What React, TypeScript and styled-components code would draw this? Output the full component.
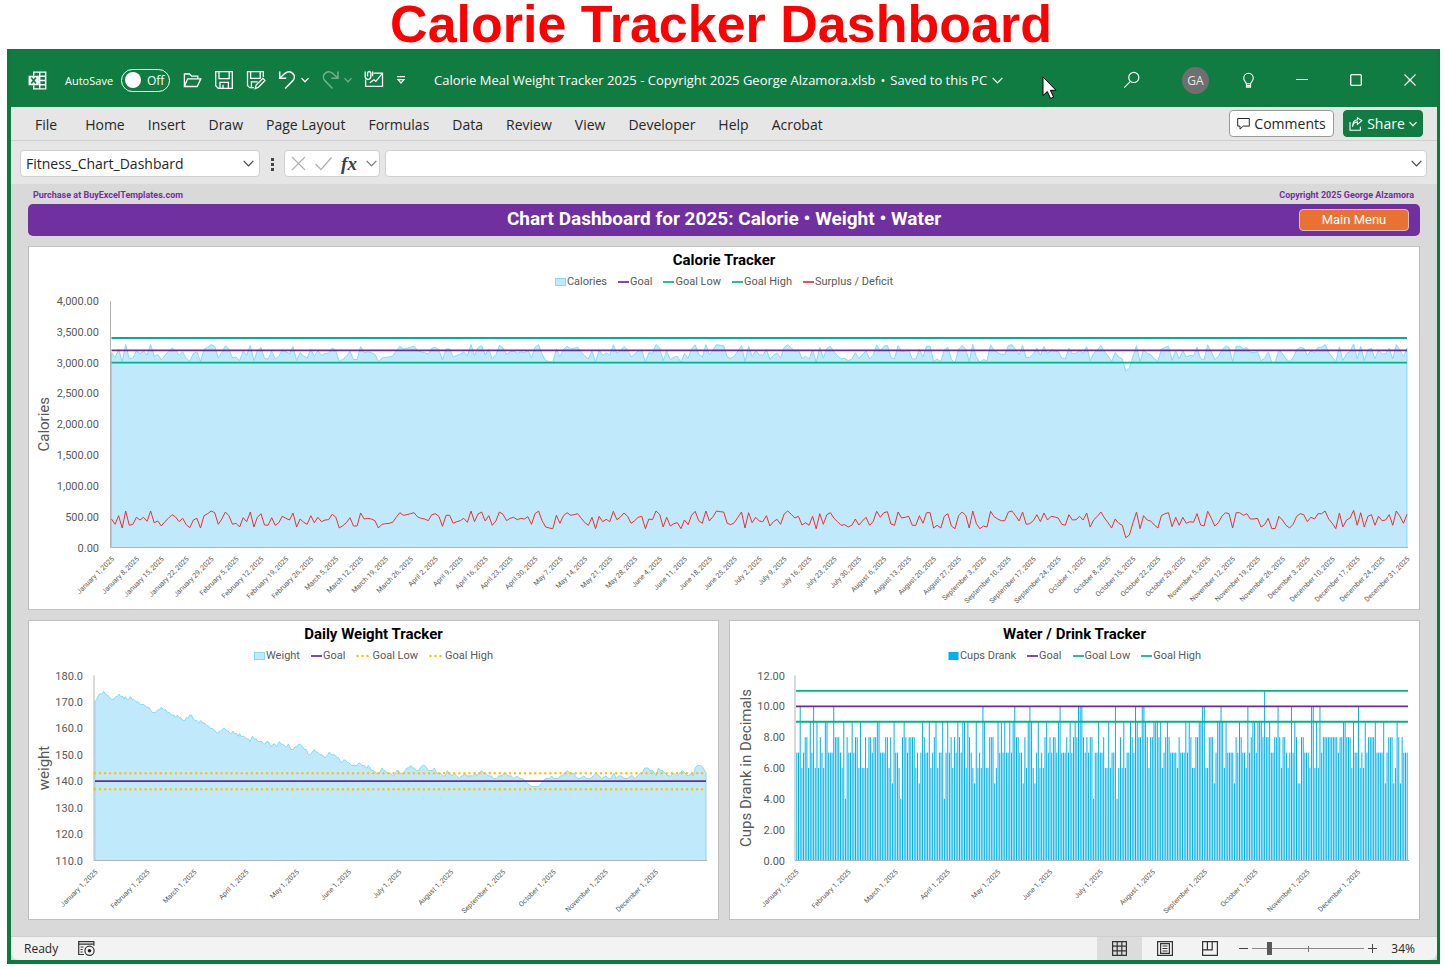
import React from 'react';
import styled, { createGlobalStyle } from 'styled-components';

const ui = `'Open Sans', 'Noto Sans', sans-serif`;
const sheetFont = `Roboto, 'Liberation Sans', sans-serif`;
const green = '#107c41';
const purple = '#7030a0';

const GlobalStyle = createGlobalStyle`
  *, *::before, *::after { box-sizing: border-box; }
  body { margin: 0; background: #fff; font-family: ${ui}; color: #262626; }
  button, input { font: inherit; color: inherit; }
  button { background: none; border: 0; padding: 0; }
  svg { display: block; }
  h1, h2, h3 { margin: 0; }
`;

/* ---------- page frame ---------- */

const Page = styled.main`
  padding: 0 5px 6px 7px;
`;

const PageTitle = styled.h1`
  padding-right: 5px;
  font: bold 52px/49px 'Liberation Sans', Arial, sans-serif;
  color: #ff0000;
  text-align: center;
  white-space: nowrap;
`;

const Window = styled.section`
  border: solid #0b7a3d;
  border-width: 1px 3px 4px 4px;
  background: #d9d9d9;
`;

/* ---------- title bar ---------- */

const TitleBar = styled.header`
  position: relative;
  display: flex;
  align-items: center;
  height: 57px;
  padding: 3px 21px 0 17px;
  background: ${green};
  color: #fff;
  font-size: 12px;
  white-space: nowrap;
`;

const AutoSave = styled.label`
  display: flex;
  align-items: center;
  margin: 0 12px 0 18px;
`;

const AutoSaveText = styled.span`
  width: 56px;
  font-size: 11px;
`;

const Toggle = styled.span`
  display: flex;
  align-items: center;
  gap: 6px;
  width: 49px;
  height: 23px;
  padding-left: 3px;
  border: 1px solid #fff;
  border-radius: 12px;
`;

const HiddenCheck = styled.input`
  appearance: none;
  width: 16px;
  height: 16px;
  margin: 0;
  border-radius: 50%;
  background: #fff;
`;

const QuickTools = styled.div`
  display: flex;
  align-items: center;
  gap: 12px;
`;

const ToolPair = styled.div<{ $dim?: boolean }>`
  display: flex;
  align-items: center;
  gap: 3px;
  opacity: ${p => (p.$dim ? 0.4 : 1)};
`;

const IconButton = styled.button`
  display: flex;
  align-items: center;
  justify-content: center;
`;

const FileName = styled.button`
  display: flex;
  align-items: center;
  gap: 5px;
  margin-left: 28px;
  font-size: 13px;
`;

const WindowTools = styled.div`
  display: flex;
  align-items: center;
  margin-left: auto;
`;

const WindowButton = styled(IconButton)`
  width: 54px;
  height: 30px;
  &:last-child { width: 33px; justify-content: flex-end; }
`;

const Avatar = styled.button`
  width: 27px;
  height: 27px;
  margin: 0 12px 0 41px;
  border-radius: 50%;
  background: #6f6f6f;
  color: #e6e6e6;
  font-size: 12px;
`;

const Pointer = styled.svg`
  position: absolute;
  left: 72.3%;
  top: 26px;
`;

/* ---------- ribbon ---------- */

const Ribbon = styled.nav`
  display: flex;
  align-items: center;
  height: 34px;
  padding: 0 14px 0 13px;
  background: #e6e6e6;
  border-bottom: 1px solid #cfcfcf;
`;

const RibbonTab = styled.button`
  padding: 2px 12px 0 11px;
  font-size: 14px;
  line-height: 32px;
  white-space: nowrap;
  &:first-child { margin-right: 5px; }
`;

const RibbonActions = styled.div`
  display: flex;
  gap: 9px;
  margin-left: auto;
`;

const ActionButton = styled.button<{ $primary?: boolean }>`
  display: flex;
  align-items: center;
  justify-content: center;
  gap: 4px;
  width: ${p => (p.$primary ? 80 : 105)}px;
  height: 27px;
  border: 1px solid ${p => (p.$primary ? green : '#9a9a9a')};
  border-radius: 4px;
  background: ${p => (p.$primary ? green : '#fff')};
  color: ${p => (p.$primary ? '#fff' : '#262626')};
  font-size: 14px;
`;

/* ---------- formula bar ---------- */

const FormulaBar = styled.div`
  display: flex;
  align-items: center;
  height: 43px;
  padding: 2px 10px 0 9px;
  background: #e6e6e6;
`;

const Field = styled.div`
  display: flex;
  align-items: center;
  height: 27px;
  padding: 0 5px;
  border: 1px solid #d0d0d0;
  border-radius: 4px;
  background: #fff;
`;

const NameField = styled(Field)`
  width: 240px;
`;

const FormulaTools = styled(Field)`
  width: 96px;
  margin-right: 5px;
  justify-content: space-between;
  padding: 0 2px 0 6px;
`;

const FormulaField = styled(Field)`
  flex: 1;
  padding-right: 4px;
`;

const FieldInput = styled.input`
  flex: 1;
  min-width: 0;
  border: 0;
  padding: 0;
  outline: 0;
  background: transparent;
  font-size: 14px;
`;

const Dots = styled.svg`
  margin: 0 9px 0 10px;
`;

const Fx = styled.span`
  font: italic bold 19px/20px 'Liberation Serif', serif;
  color: #404040;
`;

/* ---------- worksheet ---------- */

const Sheet = styled.div`
  padding: 0 17px 16px;
  font-family: ${sheetFont};
`;

const Credits = styled.div`
  display: flex;
  justify-content: space-between;
  padding: 2px 6px 0 5px;
  font-size: 9px;
  font-weight: 700;
  line-height: 18px;
  color: ${purple};
`;

const CreditLink = styled.a`
  color: inherit;
  text-decoration: none;
`;

const Banner = styled.div`
  display: grid;
  grid-template-columns: 1fr auto 1fr;
  align-items: center;
  height: 32px;
  margin-bottom: 10px;
  padding: 0 11px;
  border-radius: 5px;
  background: ${purple};
  color: #fff;
`;

const BannerTitle = styled.h2`
  grid-column: 2;
  padding-bottom: 2px;
  font-size: 19px;
  line-height: 24px;
`;

const MenuButton = styled.button`
  justify-self: end;
  width: 110px;
  height: 22px;
  border: 1px solid #d9b9c4;
  border-radius: 4px;
  background: #e97132;
  color: #fff;
  font-size: 13px;
  line-height: 18px;
`;

const Charts = styled.div`
  display: grid;
  grid-template-columns: 1fr 1fr;
  gap: 10px;
`;

const Card = styled.article<{ $wide?: boolean }>`
  grid-column: ${p => (p.$wide ? '1 / -1' : 'auto')};
  min-width: 0;
  padding-top: 3px;
  border: 1px solid #bfbfbf;
  background: #fff;
`;

const CardTitle = styled.h3`
  font-size: 15px;
  line-height: 20px;
  color: #000;
  text-align: center;
`;

const Legend = styled.ul`
  display: flex;
  justify-content: center;
  gap: 11px;
  height: 20px;
  margin: 2px 0 0;
  padding: 0;
  list-style: none;
  font-size: 11px;
  line-height: 20px;
  color: #595959;
`;

const LegendItem = styled.li`
  display: flex;
  align-items: center;
  gap: 1px;
`;

const Plot = styled.svg`
  width: 100%;
  height: auto;
  text { font-family: ${sheetFont}; fill: #595959; }
`;

/* ---------- status bar ---------- */

const StatusBar = styled.footer`
  display: flex;
  align-items: center;
  height: 24px;
  padding: 0 22px 0 13px;
  border-top: 1px solid #cfcfcf;
  border-radius: 0 0 8px 8px;
  background: #f3f3f3;
  font-size: 12px;
`;

const MacroButton = styled(IconButton)`
  margin-left: 20px;
`;

const Views = styled.div`
  display: flex;
  align-self: stretch;
  margin-left: auto;
`;

const ViewButton = styled(IconButton)<{ $active?: boolean }>`
  width: 45px;
  background: ${p => (p.$active ? '#dcdcdc' : 'transparent')};
`;

const Zoom = styled.div`
  display: flex;
  align-items: center;
  gap: 4px;
  margin-left: 7px;
`;

const ZoomRange = styled.input`
  appearance: none;
  width: 112px;
  height: 13px;
  margin: 0;
  background:
    linear-gradient(#7a7a7a, #7a7a7a) center / 1px 6px no-repeat,
    linear-gradient(#8a8a8a, #8a8a8a) center / 100% 1px no-repeat;
  &::-webkit-slider-thumb {
    appearance: none;
    width: 5px;
    height: 13px;
    background: #5a5a5a;
  }
`;

const Percent = styled.span`
  width: 34px;
  text-align: right;
`;

/* ---------- icons ---------- */

const Chevron = ({ size = 8, w = 1.2, color = 'currentColor' }: { size?: number; w?: number; color?: string }) => (
  <svg width={size} height={size} viewBox="0 0 10 10" fill="none" stroke={color} strokeWidth={(w * 10) / size}>
    <path d="M.6 2.6 5 7.2 9.4 2.6" />
  </svg>
);

const Glyph = ({ children, size = 20, w = 1.3 }: { children: React.ReactNode; size?: number; w?: number }) => (
  <svg width={size} height={size} viewBox="0 0 20 20" fill="none" stroke="currentColor" strokeWidth={w}>
    {children}
  </svg>
);

const ExcelIcon = () => (
  <Glyph size={19} w={1.5}>
    <path d="M6 5V1.2h12.6v17.6H6V15M12.3 1.2v17.6M12 5.6h6.6M12 10h6.6M12 14.4h6.6" />
    <path d="M.6 5h10.8v10H.6z" fill="#fff" stroke="none" />
    <path d="m3.4 6.8 5 6.4M8.4 6.8l-5 6.4" stroke={green} strokeWidth="1.8" />
  </Glyph>
);

const OpenIcon = () => (
  <Glyph>
    <path d="M2.400 16.500V4h5.200l2 2.200h6.200v2.600M2.400 16.500 5.600 8.800h13.200l-3.600 7.700z" />
  </Glyph>
);

const SaveIcon = () => (
  <Glyph>
    <path d="M1.7 1.7h16.6v16.6H4.2l-2.5-2.5zM5 1.700v7h10.200v-7M6 18.300v-6h8.400v6M9 14.800v3.400" />
  </Glyph>
);

const SaveAsIcon = () => (
  <Glyph>
    <path d="M8 17.600H3.700l-2.200-2.200V1.700h15.800V7M4.600 1.700v6.600h9.600V1.700M5.400 17.500v-5.700h6.300" />
    <path d="m9.200 18.600.9-3.600 6.800-6.700 2.100 2.100-6.600 6.900z" />
  </Glyph>
);

const UndoIcon = () => (
  <Glyph w={1.5}>
    <path d="M1.700 1.600v6.600h6.600M1.900 8 7 3.300c6-4.400 12.600 2.700 7.600 7.600L7.200 18.600" />
  </Glyph>
);

const RedoIcon = () => (
  <Glyph w={1.5}>
    <path d="M17 1.600v6.600h-6.600M16.800 8l-5.100-4.700c-6-4.400-12.600 2.700-7.600 7.600l7.400 7.700" />
  </Glyph>
);

const MailIcon = () => (
  <Glyph>
    <path d="M9.500 3.200h9v13.200H1.600v-7M5.800 12.800l4.200-3 1.800 1.600 6.500-8" />
    <path d="M1.200 1.600v5c0 3.600 5.600 3.600 5.600 0V3.200c0-2.300-3.200-2.300-3.200 0v3.200M8.600 1.600v4.600" />
  </Glyph>
);

const CustomizeIcon = () => (
  <svg width="10" height="10" viewBox="0 0 10 10" fill="none" stroke="currentColor" strokeWidth="1.2">
    <path d="M1 1.600h8M2 4.600 5 8l3-3.400z" />
  </svg>
);

const SearchIcon = () => (
  <Glyph size={18}>
    <circle cx="12" cy="7.2" r="5.6" />
    <path d="m8.200 11.600-6.800 6.800" />
  </Glyph>
);

const BulbIcon = () => (
  <Glyph size={17}>
    <path d="M7.400 13.800c0-2-3-3-3-6.800a5.600 5.600 0 0 1 11.200 0c0 3.800-3 4.800-3 6.800zM7.600 13.800v4h4.800v-4M7.600 16h4.800" />
  </Glyph>
);

const CommentIcon = () => (
  <svg width="13" height="13" viewBox="0 0 13 13" fill="none" stroke="currentColor">
    <path d="M.7 1.500h11.600v7.600H6.200l-3.200 3v-3H.7z" />
  </svg>
);

const ShareIcon = () => (
  <svg width="14" height="14" viewBox="0 0 14 14" fill="none" stroke="currentColor" strokeWidth="1.1">
    <path d="M1 5v8.300h10.400V9.500M3.600 9.800C3.900 6.600 5.700 5 8.400 4.900V7.300l4.500-3.700L8.400.8v2C5.200 3.100 3.500 5.700 3.600 9.800z" />
  </svg>
);

/* ---------- data ---------- */

// One gauge step per day; surplus in kcal is 934 − 5.42 × step.
const gauge = [
  87, 103, 77, 114, 63, 106, 103, 82, 90, 82, 94, 63, 98, 93, 108, 95, 85, 74, 81, 95, 85, 104, 113, 90, 85, 114, 77, 71, 63, 68,
  103, 87, 66, 77, 103, 100, 111, 83, 95, 66, 111, 82, 71, 105, 106, 83, 106, 98, 79, 85, 90, 69, 111, 87, 97, 103, 77, 98, 82, 95,
  90, 89, 73, 81, 114, 107, 98, 83, 108, 108, 69, 87, 85, 87, 92, 114, 103, 101, 100, 97, 82, 68, 76, 74, 71, 68, 81, 85, 87, 92,
  74, 71, 79, 109, 76, 76, 100, 95, 92, 85, 97, 63, 95, 72, 66, 93, 77, 106, 93, 66, 73, 92, 85, 82, 89, 85, 87, 80, 103, 71,
  63, 92, 111, 114, 116, 76, 100, 77, 68, 76, 74, 71, 85, 98, 106, 82, 116, 79, 95, 88, 95, 64, 89, 81, 69, 79, 100, 92, 82, 79,
  116, 87, 89, 63, 73, 111, 82, 108, 101, 98, 116, 90, 104, 76, 64, 92, 100, 63, 93, 80, 63, 65, 66, 100, 104, 98, 82, 66, 114, 68,
  98, 82, 93, 95, 77, 108, 95, 88, 103, 72, 63, 73, 84, 79, 105, 98, 106, 79, 116, 71, 103, 74, 68, 85, 95, 106, 104, 111, 106, 87,
  105, 93, 82, 106, 95, 64, 82, 68, 65, 102, 106, 66, 84, 82, 79, 106, 106, 77, 100, 68, 68, 114, 106, 114, 79, 71, 108, 116, 77, 66,
  76, 114, 63, 101, 116, 108, 111, 64, 80, 87, 92, 92, 66, 63, 77, 93, 66, 103, 101, 92, 74, 95, 69, 90, 79, 81, 84, 103, 106, 74,
  90, 89, 79, 90, 69, 111, 89, 79, 66, 84, 98, 114, 87, 100, 106, 143, 135, 98, 66, 116, 77, 90, 93, 105, 114, 77, 71, 68, 110, 82,
  106, 82, 100, 95, 97, 71, 105, 108, 64, 85, 108, 98, 79, 68, 71, 114, 68, 68, 76, 71, 87, 87, 85, 111, 104, 85, 116, 115, 79, 90,
  106, 114, 103, 79, 71, 74, 95, 82, 87, 71, 71, 63, 87, 100, 116, 69, 111, 90, 84, 61, 106, 68, 111, 79, 74, 106, 79, 92, 90, 74,
  106, 63, 79, 100, 73,
];
const surplus = gauge.map(g => 934 - 5.42 * g);
const BURNED = 2700;

// Turning points of the weight curve: position on the year's 285–2118 scale, then pounds.
const weightPoints = `285:170 290:171 298:173 306:173 311:174 317:173 327:172 334:171 341:171 347:172 352:172 357:173 362:172 369:172
373:171 376:172 380:171 387:171 391:172 396:171 401:171 408:170 415:170 421:169 432:169 439:168 446:168 456:166 467:166 473:167
478:167 484:168 491:167 497:167 503:166 508:166 513:165 521:165 526:164 532:165 537:164 543:164 548:163 555:163 559:164 564:164
569:165 574:165 583:163 590:163 597:162 602:163 608:162 614:162 619:161 625:161 630:160 638:160 645:159 653:158 658:159 662:159
670:160 674:160 680:159 685:159 691:158 694:158 699:159 703:158 710:158 714:157 719:158 722:157 733:157 739:156 745:156 750:155
757:157 764:156 769:156 774:155 785:155 791:154 795:154 800:155 804:155 814:153 819:154 825:154 830:153 838:155 843:154 849:154
857:153 860:153 865:154 873:152 880:152 885:153 892:153 896:154 901:154 908:153 914:152 919:152 925:150 932:150 937:151 942:152
948:151 953:151 960:150 966:150 972:149 977:149 983:150 988:151 994:150 1004:150 1010:149 1015:149 1024:147 1031:148 1036:148
1042:147 1047:147 1053:146 1070:146 1078:147 1086:146 1093:146 1098:145 1102:145 1105:146 1115:144 1120:144 1130:143 1138:143
1146:145 1150:144 1156:144 1161:143 1172:143 1178:142 1183:142 1190:144 1195:144 1200:143 1210:143 1215:144 1221:145 1226:145
1232:146 1238:145 1243:145 1250:144 1256:144 1261:145 1268:146 1274:146 1280:145 1286:144 1297:144 1303:145 1310:143 1322:143
1328:142 1336:142 1342:144 1347:143 1357:142 1362:143 1370:142 1378:141 1385:142 1390:142 1394:143 1398:142 1408:142 1418:142
1426:143 1430:142 1436:143 1445:144 1451:143 1458:143 1464:142 1474:142 1481:141 1488:141 1496:142 1506:142 1512:143 1518:143
1524:142 1534:142 1542:141 1550:142 1560:141 1568:141 1576:140 1584:139 1595:138 1614:138 1624:139 1630:140 1636:141 1648:141
1655:142 1662:141 1673:141 1682:142 1687:142 1693:143 1702:144 1710:143 1720:143 1726:142 1734:141 1740:141 1752:142 1760:141
1770:141 1780:142 1788:143 1798:142 1805:141 1818:142 1824:141 1832:141 1842:143 1848:141 1856:142 1862:142 1874:141 1882:141
1892:142 1898:142 1904:141 1914:142 1920:143 1926:143 1934:145 1944:145 1950:144 1958:144 1968:142 1975:145 1982:144 1988:144
1996:143 2004:142 2012:142 2022:143 2030:142 2038:143 2048:144 2055:143 2064:142 2076:143 2080:142 2086:145 2092:146 2102:146
2110:145 2118:143`
  .split(/\s+/)
  .map(p => p.split(':').map(Number));

const cups = [
  7, 7, 10, 6, 7, 8, 8, 6, 9, 7, 10, 6, 9, 6, 8, 7, 6, 9, 9, 7, 7, 7, 10, 8, 8, 8, 7, 6, 9, 4,
  8, 7, 7, 9, 7, 8, 8, 6, 9, 6, 6, 8, 6, 8, 8, 7, 8, 8, 9, 9, 7, 7, 7, 8, 8, 6, 8, 5, 9, 7,
  7, 6, 4, 8, 9, 8, 7, 8, 8, 8, 8, 6, 7, 5, 7, 9, 8, 7, 7, 9, 6, 7, 8, 9, 6, 7, 7, 9, 4, 7,
  9, 7, 8, 6, 8, 7, 9, 8, 7, 9, 9, 6, 9, 8, 7, 6, 5, 9, 6, 7, 6, 10, 9, 6, 6, 8, 8, 8, 5, 6,
  9, 7, 9, 7, 9, 7, 7, 9, 7, 9, 10, 8, 8, 7, 7, 5, 8, 6, 9, 10, 9, 6, 5, 7, 9, 6, 7, 6, 8, 9,
  7, 8, 7, 8, 8, 7, 9, 10, 7, 7, 7, 8, 7, 9, 7, 8, 9, 8, 10, 10, 10, 8, 7, 8, 7, 8, 8, 4, 7, 7,
  9, 7, 7, 8, 6, 6, 9, 6, 7, 7, 10, 4, 6, 8, 6, 9, 6, 7, 7, 9, 8, 7, 10, 9, 8, 8, 10, 10, 9, 8,
  6, 8, 8, 9, 9, 9, 8, 9, 6, 7, 8, 9, 8, 7, 7, 7, 7, 6, 8, 7, 7, 7, 9, 7, 9, 8, 6, 6, 8, 8,
  9, 9, 10, 10, 6, 6, 8, 8, 8, 5, 7, 9, 9, 10, 9, 6, 9, 7, 7, 7, 7, 5, 8, 7, 9, 8, 7, 7, 6, 10,
  7, 8, 9, 9, 7, 9, 9, 9, 8, 11, 8, 8, 9, 7, 7, 8, 8, 10, 8, 6, 8, 8, 7, 6, 7, 10, 7, 9, 8, 5,
  5, 8, 8, 7, 7, 7, 6, 10, 10, 6, 9, 6, 10, 7, 8, 8, 8, 8, 8, 8, 8, 8, 8, 7, 8, 8, 9, 9, 8, 8,
  8, 6, 9, 7, 7, 10, 6, 7, 6, 9, 7, 8, 8, 8, 8, 9, 7, 7, 7, 7, 9, 5, 7, 8, 8, 8, 5, 6, 9, 8,
  5, 8, 7, 7, 7,
];

const MONTHS = ['January', 'February', 'March', 'April', 'May', 'June', 'July', 'August', 'September', 'October', 'November', 'December'];
const dateLabel = (day: number) => {
  const d = new Date(Date.UTC(2025, 0, 1 + day));
  return `${MONTHS[d.getUTCMonth()]} ${d.getUTCDate()}, 2025`;
};
const WEEK_DAYS = Array.from({ length: 53 }, (_, i) => i * 7);
const MONTH_DAYS = MONTHS.map((_, m) => (Date.UTC(2025, m, 1) - Date.UTC(2025, 0, 1)) / 86400000);

const toPath = (pts: number[][]) => 'M' + pts.map(([x, y]) => `${x.toFixed(1)} ${y.toFixed(1)}`).join('L');

/* ---------- chart parts ---------- */

const AREA = '#c0eafb';
const AREA_EDGE = '#87d9f8';
const TEAL = '#00b389';
const GOAL = '#6a2a9e';
const GOLD = '#ffc000';
const BAR = '#00b0f0';

type Frame = { left: number; right: number; top: number; bottom: number };

const Axes = ({ f, ticks, labelX, days, title, titleX }: {
  f: Frame; ticks: string[]; labelX: number; days: number[]; title: string; titleX: number;
}) => {
  const midY = (f.top + f.bottom) / 2;
  return (
    <g>
      <path d={`M${f.left - 1} ${f.top}V${f.bottom}H${f.right + 1}`} fill="none" stroke="#b3b3b3" />
      {ticks.map((t, i) => (
        <text key={t} x={labelX} y={f.top + ((f.bottom - f.top) * i) / (ticks.length - 1) + 4} fontSize="11" textAnchor="end">{t}</text>
      ))}
      {days.map(d => {
        const x = f.left + ((f.right - f.left) * d) / 364 + 3;
        const y = f.bottom + 12;
        return <text key={d} x={x} y={y} fontSize="7" textAnchor="end" transform={`rotate(-45 ${x} ${y})`}>{dateLabel(d)}</text>;
      })}
      <text x={titleX} y={midY} fontSize="15" textAnchor="middle" transform={`rotate(-90 ${titleX} ${midY})`}>{title}</text>
    </g>
  );
};

const Level = ({ f, y, color, dotted }: { f: Frame; y: number; color: string; dotted?: boolean }) => (
  <path
    d={`M${f.left} ${y}H${f.right}`}
    stroke={color}
    strokeWidth={dotted ? 2.5 : 1.8}
    strokeLinecap={dotted ? 'round' : 'butt'}
    strokeDasharray={dotted ? '0 5.06' : undefined}
  />
);

const CaloriePlot = () => {
  const f = { left: 82.5, right: 1378, top: 9, bottom: 255.5 };
  const x = (i: number) => f.left + ((f.right - f.left) * i) / 364;
  const y = (v: number) => f.bottom - ((f.bottom - f.top) * v) / 4000;
  const line = toPath(surplus.map((v, i) => [x(i), y(v + BURNED)]));
  return (
    <Plot viewBox="0 0 1390 317" role="img" aria-label="Calorie Tracker">
      <path d={`${line}V${f.bottom}H${f.left}Z`} fill={AREA} stroke={AREA_EDGE} />
      <Axes f={f} labelX={70} titleX={20} days={WEEK_DAYS} title="Calories"
        ticks={['4,000.00', '3,500.00', '3,000.00', '2,500.00', '2,000.00', '1,500.00', '1,000.00', '500.00', '0.00']} />
      <Level f={f} y={y(3400)} color={TEAL} />
      <Level f={f} y={y(3200)} color={GOAL} />
      <Level f={f} y={y(3000)} color={TEAL} />
      <path d={toPath(surplus.map((v, i) => [x(i), y(v)]))} fill="none" stroke="#fa2a2a" />
    </Plot>
  );
};

const WeightPlot = () => {
  const f = { left: 66, right: 677, top: 9.5, bottom: 194.5 };
  const y = (v: number) => f.bottom - ((f.bottom - f.top) * (v - 110)) / 70;
  const pts = weightPoints.map(([p, w]) => [f.left + ((p - 285) / 1833) * (f.right - f.left), y(w)]);
  return (
    <Plot viewBox="0 0 689 253" role="img" aria-label="Daily Weight Tracker">
      <path d={`${toPath(pts)}V${f.bottom}H${f.left}Z`} fill={AREA} stroke={AREA_EDGE} />
      <Axes f={f} labelX={54} titleX={20} days={MONTH_DAYS} title="weight"
        ticks={['180.0', '170.0', '160.0', '150.0', '140.0', '130.0', '120.0', '110.0']} />
      <Level f={f} y={y(143)} color={GOLD} dotted />
      <Level f={f} y={y(140)} color={GOAL} />
      <Level f={f} y={y(137)} color={GOLD} dotted />
    </Plot>
  );
};

const WaterPlot = () => {
  const f = { left: 66, right: 678, top: 9.5, bottom: 194.5 };
  const step = (f.right - f.left) / 365;
  const y = (v: number) => f.bottom - ((f.bottom - f.top) * v) / 12;
  return (
    <Plot viewBox="0 0 689 253" role="img" aria-label="Water / Drink Tracker">
      <path d={cups.map((v, i) => `M${(f.left + step * (i + 0.5)).toFixed(2)} ${f.bottom}V${y(v).toFixed(1)}`).join('')} stroke={BAR} strokeWidth="1" />
      <Axes f={f} labelX={55} titleX={21} days={MONTH_DAYS} title="Cups Drank in Decimals"
        ticks={['12.00', '10.00', '8.00', '6.00', '4.00', '2.00', '0.00']} />
      <Level f={f} y={y(11)} color={TEAL} />
      <Level f={f} y={y(10)} color={GOAL} />
      <Level f={f} y={y(9)} color={TEAL} />
    </Plot>
  );
};

type Key = { label: string; color: string; kind: 'area' | 'bar' | 'line' | 'dots' };

const Swatch = ({ color, kind }: Key) => {
  const width = kind === 'dots' ? 15 : 11;
  return (
    <svg width={width} height="10" viewBox={`0 0 ${width} 10`}>
      {kind === 'area' && <rect x=".5" y="1.5" width="10" height="7" fill={AREA} stroke={AREA_EDGE} />}
      {kind === 'bar' && <rect x=".5" y="1" width="10" height="8" fill={color} />}
      {kind === 'line' && <path d="M0 5h11" stroke={color} strokeWidth="1.7" />}
      {kind === 'dots' && <path d="M1.500 5h11" stroke={color} strokeWidth="2.5" strokeLinecap="round" strokeDasharray="0 5" />}
    </svg>
  );
};

const ChartCard = ({ title, keys, wide, children }: { title: string; keys: Key[]; wide?: boolean; children: React.ReactNode }) => (
  <Card $wide={wide}>
    <CardTitle>{title}</CardTitle>
    <Legend>
      {keys.map(k => (
        <LegendItem key={k.label}><Swatch {...k} />{k.label}</LegendItem>
      ))}
    </Legend>
    {children}
  </Card>
);

const TABS = ['File', 'Home', 'Insert', 'Draw', 'Page Layout', 'Formulas', 'Data', 'Review', 'View', 'Developer', 'Help', 'Acrobat'];

export default function App() {
  return (
    <Page>
      <GlobalStyle />
      <PageTitle>Calorie Tracker Dashboard</PageTitle>
      <Window>
        <TitleBar>
          <ExcelIcon />
          <AutoSave>
            <AutoSaveText>AutoSave</AutoSaveText>
            <Toggle><HiddenCheck type="checkbox" />Off</Toggle>
          </AutoSave>
          <QuickTools>
            <IconButton aria-label="Open"><OpenIcon /></IconButton>
            <IconButton aria-label="Save"><SaveIcon /></IconButton>
            <IconButton aria-label="Save as"><SaveAsIcon /></IconButton>
            <ToolPair>
              <IconButton aria-label="Undo"><UndoIcon /></IconButton>
              <IconButton aria-label="Undo list"><Chevron /></IconButton>
            </ToolPair>
            <ToolPair $dim>
              <IconButton aria-label="Redo"><RedoIcon /></IconButton>
              <IconButton aria-label="Redo list"><Chevron /></IconButton>
            </ToolPair>
            <IconButton aria-label="Email"><MailIcon /></IconButton>
            <IconButton aria-label="Customize toolbar"><CustomizeIcon /></IconButton>
          </QuickTools>
          <FileName>
            <span>Calorie Meal Weight Tracker 2025 - Copyright 2025 George Alzamora.xlsb</span>
            <span>•</span>
            <span>Saved to this PC</span>
            <Chevron size={11} />
          </FileName>
          <WindowTools>
            <IconButton aria-label="Search"><SearchIcon /></IconButton>
            <Avatar>GA</Avatar>
            <WindowButton aria-label="Tips"><BulbIcon /></WindowButton>
            <WindowButton aria-label="Minimize">
              <svg width="12" height="12" viewBox="0 0 12 12" stroke="#fff"><path d="M0 5.500h12" /></svg>
            </WindowButton>
            <WindowButton aria-label="Maximize">
              <svg width="12" height="12" viewBox="0 0 12 12" fill="none" stroke="#fff" strokeWidth="1.3"><rect x=".7" y=".7" width="10.6" height="10.6" rx="1" /></svg>
            </WindowButton>
            <WindowButton aria-label="Close">
              <svg width="12" height="12" viewBox="0 0 12 12" stroke="#fff" strokeWidth="1.2"><path d="m.5.5 11 11M11.500.5l-11 11" /></svg>
            </WindowButton>
          </WindowTools>
          <Pointer width="15" height="24" viewBox="0 0 15 24">
            <path d="M1 1v18.500l4.300-4 3.300 7 3-1.400-3.200-6.800H14z" fill="#fff" stroke="#000" />
          </Pointer>
        </TitleBar>
        <Ribbon>
          {TABS.map(t => <RibbonTab key={t}>{t}</RibbonTab>)}
          <RibbonActions>
            <ActionButton><CommentIcon />Comments</ActionButton>
            <ActionButton $primary><ShareIcon />Share<Chevron size={8} /></ActionButton>
          </RibbonActions>
        </Ribbon>
        <FormulaBar>
          <NameField>
            <FieldInput aria-label="Name box" defaultValue="Fitness_Chart_Dashbard" />
            <IconButton aria-label="Names"><Chevron size={11} color="#444" /></IconButton>
          </NameField>
          <Dots width="5" height="14" viewBox="0 0 5 14" fill="#444">
            <path d="M1 1h3v3H1zM1 6h3v3H1zM1 11h3v3H1z" />
          </Dots>
          <FormulaTools>
            <IconButton aria-label="Cancel">
              <svg width="15" height="15" viewBox="0 0 15 15" stroke="#b0b0b0" strokeWidth="1.2"><path d="m1 1 13 13M14 1 1 14" /></svg>
            </IconButton>
            <IconButton aria-label="Enter">
              <svg width="17" height="15" viewBox="0 0 17 15" fill="none" stroke="#b0b0b0" strokeWidth="1.2"><path d="m.5 8 5.500 5.500L16.500 1.500" /></svg>
            </IconButton>
            <IconButton aria-label="Insert function"><Fx>fx</Fx></IconButton>
            <IconButton aria-label="Function list"><Chevron size={11} color="#777" /></IconButton>
          </FormulaTools>
          <FormulaField>
            <FieldInput aria-label="Formula" />
            <IconButton aria-label="Expand formula bar"><Chevron size={11} color="#444" /></IconButton>
          </FormulaField>
        </FormulaBar>
        <Sheet>
          <Credits>
            <CreditLink href="#templates">Purchase at BuyExcelTemplates.com</CreditLink>
            <span>Copyright 2025 George Alzamora</span>
          </Credits>
          <Banner>
            <BannerTitle>Chart Dashboard for 2025: Calorie • Weight • Water</BannerTitle>
            <MenuButton>Main Menu</MenuButton>
          </Banner>
          <Charts>
            <ChartCard wide title="Calorie Tracker" keys={[
              { label: 'Calories', color: AREA, kind: 'area' },
              { label: 'Goal', color: GOAL, kind: 'line' },
              { label: 'Goal Low', color: TEAL, kind: 'line' },
              { label: 'Goal High', color: TEAL, kind: 'line' },
              { label: 'Surplus / Deficit', color: '#fa2a2a', kind: 'line' },
            ]}>
              <CaloriePlot />
            </ChartCard>
            <ChartCard title="Daily Weight Tracker" keys={[
              { label: 'Weight', color: AREA, kind: 'area' },
              { label: 'Goal', color: GOAL, kind: 'line' },
              { label: 'Goal Low', color: GOLD, kind: 'dots' },
              { label: 'Goal High', color: GOLD, kind: 'dots' },
            ]}>
              <WeightPlot />
            </ChartCard>
            <ChartCard title="Water / Drink Tracker" keys={[
              { label: 'Cups Drank', color: BAR, kind: 'bar' },
              { label: 'Goal', color: GOAL, kind: 'line' },
              { label: 'Goal Low', color: TEAL, kind: 'line' },
              { label: 'Goal High', color: TEAL, kind: 'line' },
            ]}>
              <WaterPlot />
            </ChartCard>
          </Charts>
        </Sheet>
        <StatusBar>
          Ready
          <MacroButton aria-label="Record macro">
            <svg width="17" height="15" viewBox="0 0 17 15" fill="none" stroke="#333" strokeWidth="1.2">
              <path d="M6 13.500H.7V.7h15.200v4M.7 3.200h15.200M2.500 6h3M2.500 8.500h2.200M2.500 11h2.200" />
              <circle cx="11.5" cy="9.700" r="4.6" />
              <circle cx="11.5" cy="9.700" r="1.8" fill="#222" stroke="none" />
            </svg>
          </MacroButton>
          <Views>
            <ViewButton $active aria-label="Normal view">
              <svg width="15" height="15" viewBox="0 0 15 15" fill="none" stroke="#333" strokeWidth="1.2"><path d="M.6.6h13.800v13.800H.6zM5.200.6v13.800M9.800.6v13.800M.6 5.200h13.800M.6 9.800h13.800" /></svg>
            </ViewButton>
            <ViewButton aria-label="Page layout view">
              <svg width="16" height="15" viewBox="0 0 16 15" fill="none" stroke="#333" strokeWidth="1.2"><path d="M.6.6h14.800v13.800H.6zM3.600 2.600h8.800v9.800H3.600zM5.500 5h5M5.500 7.500h5M5.500 10h5" /></svg>
            </ViewButton>
            <ViewButton aria-label="Page break preview">
              <svg width="16" height="15" viewBox="0 0 16 15" fill="none" stroke="#333" strokeWidth="1.2"><path d="M.6.6h14.800v13.800H.6zM.6 8.800h9.600V.6M5.400.6v8.200" /></svg>
            </ViewButton>
          </Views>
          <Zoom>
            <IconButton aria-label="Zoom out">
              <svg width="9" height="9" viewBox="0 0 9 9" stroke="#444"><path d="M0 4.500h9" /></svg>
            </IconButton>
            <ZoomRange type="range" aria-label="Zoom" min={0} max={100} defaultValue={14} />
            <IconButton aria-label="Zoom in">
              <svg width="9" height="9" viewBox="0 0 9 9" stroke="#444"><path d="M0 4.500h9M4.500 0v9" /></svg>
            </IconButton>
            <Percent>34%</Percent>
          </Zoom>
        </StatusBar>
      </Window>
    </Page>
  );
}
